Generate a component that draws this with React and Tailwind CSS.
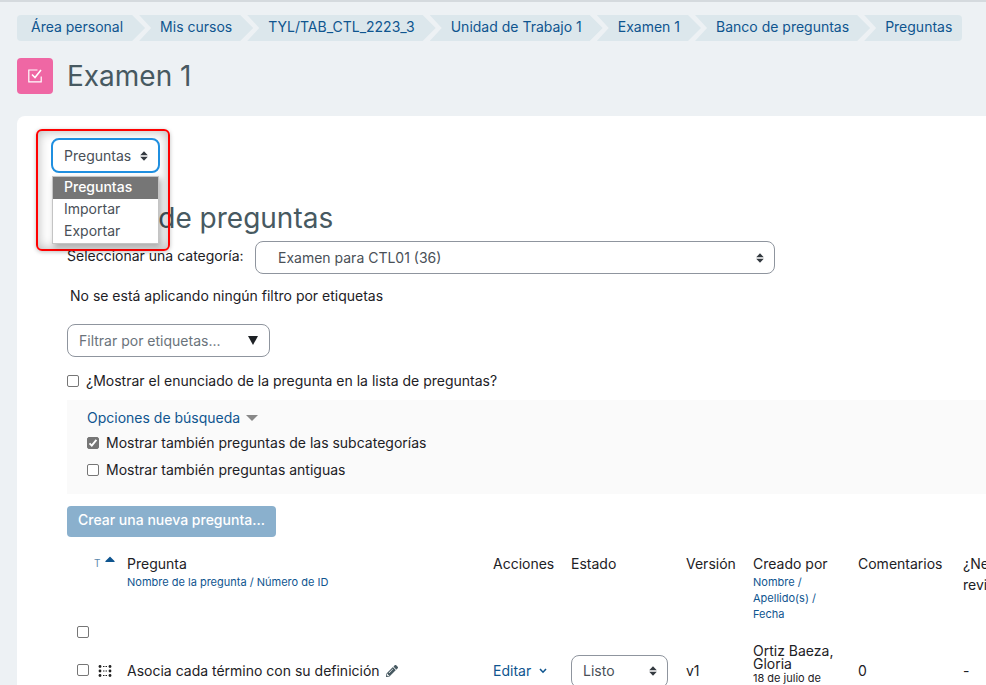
import React, { useState } from 'react';
import { FaCaretUp, FaPencilAlt } from 'react-icons/fa';

const CRUMBS = [
    'Área personal',
    'Mis cursos',
    'TYL/TAB_CTL_2223_3',
    'Unidad de Trabajo 1',
    'Examen 1',
    'Banco de preguntas',
    'Preguntas',
];

const SECTIONS = ['Preguntas', 'Importar', 'Exportar'];

const QUESTIONS = [
    {
        id: 1,
        name: 'Asocia cada término con su definición',
        status: 'Listo',
        version: 'v1',
        author: 'Ortiz Baeza, Gloria',
        date: '18 de julio de 2022',
        comments: 0,
    },
];

const SelectArrows = ({ className }) => (
    <svg viewBox="0 0 8 10" aria-hidden="true" className={`pointer-events-none h-[10px] w-2 self-center justify-self-end [grid-area:1/1] ${className}`}>
        <path d="M4 0.3 7.8 4.3H0.2zM4 9.7 0.2 5.7h7.6z" fill="#343a40" />
    </svg>
);

const Checkbox = ({ checked = false, ...props }) => {
    const [on, setOn] = useState(checked);
    return (
        <span className="inline-grid size-3 shrink-0">
            <input
                type="checkbox"
                checked={on}
                onChange={() => setOn(!on)}
                className="size-3 appearance-none rounded-xs border border-[#767676] bg-white checked:bg-[#767676] [grid-area:1/1]"
                {...props}
            />
            {on && (
                <svg viewBox="0 0 12 12" aria-hidden="true" className="pointer-events-none size-3 [grid-area:1/1]">
                    <path d="M2.5 6.3 4.8 8.6 9.4 2.8" fill="none" stroke="#fff" strokeWidth="1.9" />
                </svg>
            )}
        </span>
    );
};

const Breadcrumb = () => (
    <nav aria-label="Ruta" className="px-[17px] pt-[13px]">
        <ol className="flex">
            {CRUMBS.map((crumb, i) => {
                let shape = '-ml-[6px] px-[21px] [clip-path:polygon(0_0,calc(100%-13px)_0,100%_50%,calc(100%-13px)_100%,0_100%,12px_50%)]';
                if (i === 0) {
                    shape = 'rounded-l pl-[14px] pr-[22px] [clip-path:polygon(0_0,calc(100%-13px)_0,100%_50%,calc(100%-13px)_100%,0_100%)]';
                } else if (i === CRUMBS.length - 1) {
                    shape = '-ml-[6px] rounded-r pl-[21px] pr-[10px] [clip-path:polygon(0_0,100%_0,100%_100%,0_100%,12px_50%)]';
                }
                return (
                    <li key={crumb} className={`h-[26px] bg-[#dce7ec] leading-6 whitespace-nowrap ${shape}`}>
                        <a href="#" className="text-[#0f558f]">{crumb}</a>
                    </li>
                );
            })}
        </ol>
    </nav>
);

const PageHeader = () => (
    <header className="flex items-center gap-[14px] px-[17px] pt-[17px] pb-[22px]">
        <span className="flex size-9 items-center justify-center rounded bg-[#ef67a4]">
            <svg viewBox="0 0 16 16" aria-hidden="true" className="size-4" fill="none" stroke="#fff" strokeWidth="1.2">
                <path d="M10.5 2H1.8v11.9h12.4V8.5" />
                <path d="M5 6.5 8 9.5 14 2" strokeWidth="1.6" />
            </svg>
        </span>
        <h1 className="text-[28px] leading-9 text-[#475961]">Examen 1</h1>
    </header>
);

const SectionPicker = () => {
    const [section, setSection] = useState('Preguntas');
    return (
        <div className="relative ml-[34px] w-[109px]">
            <div className="absolute -top-[9px] -left-[15px] h-[122px] w-[134px] rounded-md border-2 border-[#ff0000] shadow-[inset_0_0_12px_rgba(0,0,0,0.3),0_1px_4px_rgba(0,0,0,0.25)]" />
            <div className="relative grid">
                <select
                    aria-label="Sección"
                    value={section}
                    onChange={(e) => setSection(e.target.value)}
                    className="h-[35px] w-full appearance-none rounded-lg border-2 border-[#1f8fe0] bg-white pl-[11px] text-[#495057] [grid-area:1/1]"
                >
                    {SECTIONS.map((s) => <option key={s}>{s}</option>)}
                </select>
                <SelectArrows className="mr-3" />
            </div>
            <ul className="absolute top-[38px] left-px w-[107px] border border-[#c4c4c4] bg-white text-[#495057] shadow-[2px_3px_6px_rgba(0,0,0,0.3)]">
                {SECTIONS.map((s) => (
                    <li
                        key={s}
                        className={`h-[22px] pl-[11px] leading-5 ${s === section ? 'bg-[#767676] font-medium text-white' : ''}`}
                    >
                        {s}
                    </li>
                ))}
            </ul>
        </div>
    );
};

const CategoryRow = () => (
    <div className="mt-[5px] flex">
        <label htmlFor="category" className="w-[188px] shrink-0 leading-[30px] whitespace-nowrap">Seleccionar una categoría:</label>
        <div className="grid w-full max-w-[520px]">
            <select
                id="category"
                className="h-[33px] w-full appearance-none rounded-lg border border-[#8f959e] bg-white pl-[22px] text-[#495057] [grid-area:1/1]"
            >
                <option>Examen para CTL01 (36)</option>
            </select>
            <SelectArrows className="mr-[11px]" />
        </div>
    </div>
);

const SearchOptions = () => (
    <section className="mt-[9px] bg-[#fafafa] px-5 pt-[7px] pb-[11px]">
        <a href="#" className="flex items-center gap-[6px] leading-[22px] text-[#0f558f]">
            Opciones de búsqueda
            <svg viewBox="0 0 12 6" aria-hidden="true" className="h-[6px] w-3">
                <path d="M0 0h12L6 6z" fill="#888" />
            </svg>
        </a>
        <label className="flex items-center gap-[7px] leading-[27px]">
            <Checkbox checked />
            Mostrar también preguntas de las subcategorías
        </label>
        <label className="flex items-center gap-[7px] leading-[27px]">
            <Checkbox />
            Mostrar también preguntas antiguas
        </label>
    </section>
);

const MatchIcon = () => (
    <svg viewBox="0 0 14 12" aria-label="Emparejamiento" className="h-3 w-[14px]" fill="#222">
        {[1.5, 6, 10.5].map((y) => (
            <g key={y}>
                <circle cx="2" cy={y} r="1.4" />
                <circle cx="12" cy={y} r="1.4" />
                <path d={`M5 ${y - 0.5}h1.5v1H5zM7.5 ${y - 0.5}H9v1H7.5z`} />
            </g>
        ))}
    </svg>
);

const QuestionTable = () => (
    <div className="mt-3 overflow-hidden">
        <table className="w-full min-w-[993px] table-fixed text-left">
            <colgroup>
                <col className="w-[27px]" />
                <col className="w-[25px]" />
                <col />
                <col className="w-[78px]" />
                <col className="w-[115px]" />
                <col className="w-[67px]" />
                <col className="w-[105px]" />
                <col className="w-[105px]" />
                <col className="w-[105px]" />
            </colgroup>
            <thead>
                <tr className="h-[92px] align-top leading-[21px] [&>th]:px-2 [&>th]:pt-1 [&>th]:font-normal">
                    <th className="align-bottom">
                        <span className="flex h-[15px] pl-[2px]"><Checkbox aria-label="Seleccionar todo" /></span>
                    </th>
                    <th>
                        <a href="#" className="-mt-[2px] -ml-2 flex items-start text-[10px] leading-6 text-[#5a87ad]">
                            T
                            <FaCaretUp className="ml-[2px] size-4 shrink-0 text-[#0f558f]" />
                        </a>
                    </th>
                    <th>
                        Pregunta
                        <div className="text-[11px] leading-4 text-[#0f558f]">
                            <a href="#">Nombre de la pregunta</a> / <a href="#">Número de ID</a>
                        </div>
                    </th>
                    <th>Acciones</th>
                    <th>Estado</th>
                    <th>Versión</th>
                    <th>
                        Creado por
                        <div className="text-[11px] leading-4 text-[#0f558f]">
                            <a href="#">Nombre</a> /<br />
                            <a href="#">Apellido(s)</a> /<br />
                            <a href="#">Fecha</a>
                        </div>
                    </th>
                    <th>Comentarios</th>
                    <th>¿Necesita revisión?</th>
                </tr>
            </thead>
            <tbody>
                {QUESTIONS.map((q) => (
                    <tr key={q.id} className="h-[60px] [&>td]:px-2">
                        <td><span className="flex pb-[2px] pl-[2px]"><Checkbox aria-label={q.name} /></span></td>
                        <td><span className="-ml-1 flex w-[14px]"><MatchIcon /></span></td>
                        <td>
                            <span className="flex items-center gap-[6px]">
                                {q.name}
                                <FaPencilAlt className="size-3 text-[#475961]" />
                            </span>
                        </td>
                        <td>
                            <button className="flex items-center gap-2 text-[#0f558f]">
                                Editar
                                <svg viewBox="0 0 8 6" aria-hidden="true" className="h-[6px] w-2">
                                    <path d="M1 1 4 4.2 7 1" fill="none" stroke="currentColor" strokeWidth="1.6" />
                                </svg>
                            </button>
                        </td>
                        <td>
                            <div className="grid w-[97px]">
                                <select
                                    aria-label="Estado"
                                    className="h-[33px] w-full appearance-none rounded-lg border border-[#8f959e] bg-white pl-[11px] text-[#495057] [grid-area:1/1]"
                                >
                                    <option>{q.status}</option>
                                </select>
                                <SelectArrows className="mr-[11px]" />
                            </div>
                        </td>
                        <td>{q.version}</td>
                        <td className="leading-[13px]">
                            {q.author}
                            <div className="mt-[2px] text-[11px]">{q.date}</div>
                        </td>
                        <td>{q.comments}</td>
                        <td>-</td>
                    </tr>
                ))}
            </tbody>
        </table>
    </div>
);

const App = () => (
    <div className="h-screen overflow-hidden border-t-2 border-[#d5dade] bg-[#edf1f4] font-['Inter',sans-serif] text-[14px] leading-5 text-[#1d2125]">
        <Breadcrumb />
        <PageHeader />
        <main className="ml-[17px] min-h-full rounded-tl-lg bg-white pt-[22px]">
            <SectionPicker />
            <div className="pl-[50px]">
                <h2 className="mt-[27px] text-[28px] leading-9 text-[#475961]">Banco de preguntas</h2>
                <CategoryRow />
                <p className="mt-3 pl-[3px]">No se está aplicando ningún filtro por etiquetas</p>
                <div className="mt-[18px] grid w-[203px]">
                    <input
                        type="text"
                        aria-label="Filtrar por etiquetas"
                        placeholder="Filtrar por etiquetas..."
                        className="h-[33px] w-full rounded-lg border border-[#8f959e] bg-white pl-[11px] placeholder:text-[#6a737b] [grid-area:1/1]"
                    />
                    <svg viewBox="0 0 10 9" aria-hidden="true" className="pointer-events-none mr-3 h-[9px] w-[10px] self-center justify-self-end [grid-area:1/1]">
                        <path d="M0 0h10L5 9z" fill="#1d2125" />
                    </svg>
                </div>
                <label className="mt-[14px] flex items-center gap-[7px]">
                    <Checkbox />
                    ¿Mostrar el enunciado de la pregunta en la lista de preguntas?
                </label>
                <SearchOptions />
                <button className="mt-3 block h-[31px] rounded bg-[#8ab0cd] px-[11px] pb-[3px] font-medium text-white">
                    Crear una nueva pregunta...
                </button>
                <QuestionTable />
            </div>
        </main>
    </div>
);

export default App;
